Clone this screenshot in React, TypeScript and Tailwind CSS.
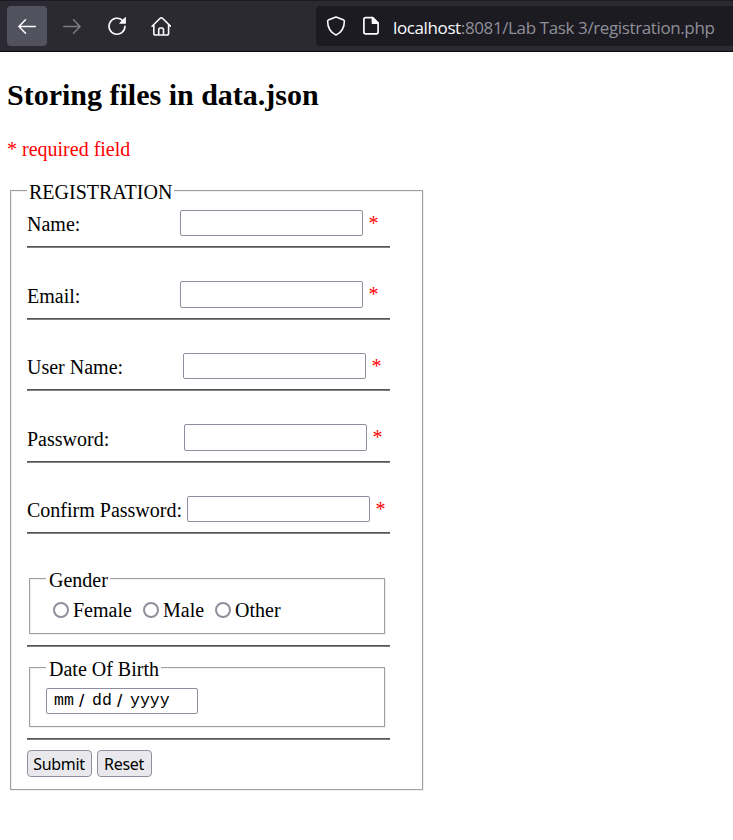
import React from "react";

const groove =
  "border border-[#a0a0a0] shadow-[1px_1px_0_#f0f0f0,inset_1px_1px_0_#f0f0f0]";
const inputBox = "rounded-[2px] border border-[#8f8f9d] bg-white outline-none";
const legend = "mt-[-10px] h-[22px] w-fit shrink-0 bg-white pr-[2px] leading-[22px]";

function Rule({ className }: { className: string }) {
  return (
    <div
      className={`h-0.5 w-[363px] shrink-0 border-t border-[#555555] bg-[#808080] ${className}`}
    />
  );
}

type FieldProps = {
  label: string;
  labelWidth: string;
  height: string;
  gap: string;
  type?: string;
};

function Field({ label, labelWidth, height, gap, type = "text" }: FieldProps) {
  return (
    <>
      <div className={`flex shrink-0 items-center ${height} ${gap}`}>
        <label className={`${labelWidth} shrink-0 whitespace-nowrap pt-0.5 leading-[22px]`}>{label}</label>
        <input type={type} aria-label={label} className={`${inputBox} h-full w-[183px]`} />
        <span className="ml-[5.5px] pb-px leading-[22px] text-[#ff0000]">*</span>
      </div>
      <Rule className="mt-[10px]" />
    </>
  );
}

function Radio({ label, className }: { label: string; className: string }) {
  return (
    <label className={`flex items-center ${className}`}>
      <input
        type="radio"
        name="gender"
        className="size-4 appearance-none rounded-full border-2 border-[#8f8f9d] bg-white"
      />
      <span className="ml-1 leading-[22px]">{label}</span>
    </label>
  );
}

function Toolbar() {
  return (
    <header className="flex h-[52px] items-center border-t border-b border-t-[#1c1b22] border-b-[#0c0c0d] bg-[#2b2a33] pl-[7px]">
      <button className="flex size-10 items-center justify-center rounded-[4px] bg-[#52525e]">
        <svg width="20" height="20" viewBox="0 0 20 20" fill="none" stroke="#fbfbfe" strokeWidth="1.5" strokeLinecap="round" strokeLinejoin="round">
          <path d="M18.3 10.5H2M8.5 3.7L1.9 10.5l6.6 6.8" />
        </svg>
      </button>
      <svg className="ml-[15px]" width="20" height="20" viewBox="0 0 20 20" fill="none" stroke="#7d7c83" strokeWidth="1.5" strokeLinecap="round" strokeLinejoin="round">
        <path d="M1.7 10.5H18M11.5 3.7l6.6 6.8-6.6 6.8" />
      </svg>
      <svg className="ml-[25px]" width="20" height="20" viewBox="0 0 20 20">
        <path d="M15.5 4.4A8 8 0 1 0 18 10.3" fill="none" stroke="#fbfbfe" strokeWidth="1.6" strokeLinecap="round" />
        <path d="M18.9 1.5v5.8a.5.5 0 0 1-.5.5h-5.6c-.5 0-.7-.5-.4-.8l5.7-5.8c.3-.3.8-.1.8.3z" fill="#fbfbfe" />
      </svg>
      <svg className="ml-[24px]" width="20" height="20" viewBox="0 0 20 20" fill="none" stroke="#fbfbfe" strokeWidth="1.6" strokeLinecap="round" strokeLinejoin="round">
        <path d="M1.1 10.2l8-7.9q1.2-1.1 2.4 0l8 7.9M2.8 8.8v8.4q0 1.8 1.8 1.8h11.2q1.8 0 1.8-1.8V8.8M7.7 18.8v-5q0-1.8 1.8-1.8h1.2q1.8 0 1.8 1.8v5" />
      </svg>
      <div className="ml-[145px] flex h-10 min-w-0 flex-1 items-center overflow-hidden rounded-l-[4px] bg-[#1c1b22] pl-[10px]">
        <svg className="shrink-0" width="20" height="20" viewBox="0 0 20 20" fill="none" stroke="#fbfbfe" strokeWidth="1.6" strokeLinejoin="round">
          <path d="M10 .9l7.8 3.2q.6.3.6.9c0 6.4-2.5 11.3-8.4 14.1C4.1 16.3 1.6 11.4 1.6 5q0-.6.6-.9z" />
        </svg>
        <svg className="ml-[17px] shrink-0" width="16" height="20" viewBox="0 0 16 20" fill="none" stroke="#fbfbfe" strokeWidth="1.7" strokeLinejoin="round">
          <path d="M2.7 1.6H9.5l5.6 5.6v8.9q0 1.8-1.8 1.8H2.7q-1.8 0-1.8-1.8V3.4q0-1.8 1.8-1.8z" />
          <path d="M9.5 1.6v5.6h5.6z" fill="#fbfbfe" />
        </svg>
        <span className="ml-[14px] whitespace-pre pt-[3px] font-['Open_Sans','Noto_Sans',sans-serif] text-[17px] leading-6 tracking-[-0.38px] text-[#8f8f98]">
          <span className="text-[#fbfbfe]">localhost</span>:8081/Lab Task 3/registration.php
        </span>
      </div>
    </header>
  );
}

export default function App() {
  return (
    <div className="h-[840px] w-[733px] overflow-hidden bg-white font-['Liberation_Serif',serif] text-[20px] text-black">
      <Toolbar />
      <main className="pl-[7px]">
        <h2 className="mt-[26px] text-[30px] leading-[34px] font-bold">Storing files in data.json</h2>
        <p className="mt-[26px] leading-[22px] text-[#ff0000]">* required field</p>

        <form className={`mt-[30px] ml-[3px] flex h-[600px] w-[413px] flex-col pl-4 ${groove}`}>
          <div className={`pl-[2px] ${legend}`}>REGISTRATION</div>
          <Field label="Name:" labelWidth="w-[153px]" height="h-[26px]" gap="mt-[7px]" />
          <Field label="Email:" labelWidth="w-[153px]" height="h-[27px]" gap="mt-[33px]" />
          <Field label="User Name:" labelWidth="w-[156px]" height="h-[26px]" gap="mt-[33px]" />
          <Field label="Password:" labelWidth="w-[157px]" height="h-[27px]" gap="mt-[33px]" type="password" />
          <Field label="Confirm Password:" labelWidth="w-[160px]" height="h-[26px]" gap="mt-[33px]" type="password" />

          <section className={`mt-11 ml-[2px] h-14 w-[356px] shrink-0 pl-4 ${groove}`}>
            <div className={`pl-[3px] ${legend}`}>Gender</div>
            <div className="mt-2 ml-[7px] flex">
              <Radio label="Female" className="w-[90px]" />
              <Radio label="Male" className="w-[72px]" />
              <Radio label="Other" className="" />
            </div>
          </section>
          <Rule className="mt-[11px]" />

          <section className={`mt-5 ml-[2px] h-[60px] w-[356px] shrink-0 pl-4 ${groove}`}>
            <div className={`pl-[3px] ${legend}`}>Date Of Birth</div>
            <div
              className={`mt-2 flex h-[26px] w-[152px] items-center whitespace-pre pl-[7px] font-['Liberation_Mono',monospace] text-[16.5px] leading-6 ${inputBox}`}
            >
              <span className="w-[25px]">mm</span>
              <span className="w-[13px] font-['Liberation_Sans',sans-serif] text-[19px]">/</span>
              <span className="w-[25px]">dd</span>
              <span className="w-[13px] font-['Liberation_Sans',sans-serif] text-[19px]">/</span>
              <span>yyyy</span>
            </div>
          </section>
          <Rule className="mt-[11px]" />

          <div className="mt-[10px] flex h-[27px] gap-[5px] font-['Noto_Sans',sans-serif] text-base leading-6 tracking-[-0.3px]">
            <button type="button" className="w-[65px] rounded-[4px] border border-[#8f8f9d] bg-[#e9e9ed] pr-px">Submit</button>
            <button type="button" className="w-[55px] rounded-[4px] border border-[#8f8f9d] bg-[#e9e9ed] pr-px">Reset</button>
          </div>
        </form>
      </main>
    </div>
  );
}
